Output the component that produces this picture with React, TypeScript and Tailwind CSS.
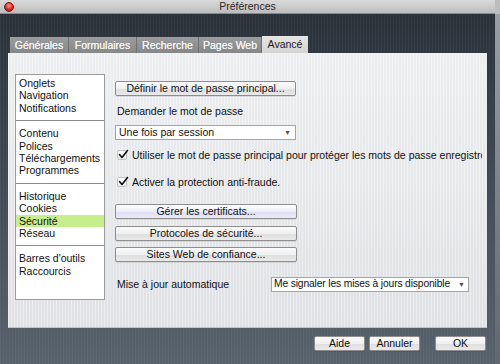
import React from "react";

const btn =
  "h-[15px] flex items-center justify-center rounded-[2px] border border-[#8e8e8e] bg-[linear-gradient(180deg,#fbfbfb_0%,#f0f0f0_50%,#dedede_51%,#e9e9e9_100%)] text-[10.5px] leading-none text-[#111] shadow-[0_1px_0_rgba(0,0,0,0.08)]";

function Check() {
  return (
    <div className="w-[10px] h-[10px] rounded-[2px] border border-[#c4c4c4] bg-[linear-gradient(180deg,#ffffff,#ececec)] relative shrink-0">
      <svg className="absolute left-[0px] top-[-2px]" width="11" height="11" viewBox="0 0 11 11">
        <path d="M1.5 5.5 L4 8.5 L9.5 1.5" fill="none" stroke="#111" strokeWidth="1.6" strokeLinecap="round" strokeLinejoin="round" />
      </svg>
    </div>
  );
}

export default function App() {
  const groups = [
    ["Onglets", "Navigation", "Notifications"],
    ["Contenu", "Polices", "Téléchargements", "Programmes"],
    ["Historique", "Cookies", "Sécurité", "Réseau"],
    ["Barres d'outils", "Raccourcis"],
  ];
  const tabs = [
    { t: "Générales", w: "w-[59px]" },
    { t: "Formulaires", w: "w-[68px]" },
    { t: "Recherche", w: "w-[62px]" },
    { t: "Pages Web", w: "w-[63px]" },
  ];
  return (
    <div className="w-[500px] h-[364px] flex overflow-hidden font-['Liberation_Sans',Arial,sans-serif] text-[#111]">
      <div className="w-[495px] h-full flex flex-col">
        {/* title bar */}
        <div className="h-[14px] relative flex items-center justify-center bg-[linear-gradient(180deg,#d9d9d9,#bdbdbd)] border-b border-[#8a8a8a]">
          <div className="absolute left-[4px] top-[2px] w-[10px] h-[10px] rounded-full bg-[radial-gradient(circle_at_50%_35%,#ff9a8a_0%,#e2261c_55%,#8e0f08_100%)] border border-[#7a1a14]" />
          <span className="text-[10.5px] leading-none text-[#2a2a2a]">Préférences</span>
        </div>
        {/* dark body */}
        <div className="flex-1 flex flex-col bg-[repeating-linear-gradient(90deg,rgba(255,255,255,0.035)_0px,rgba(255,255,255,0.035)_1px,transparent_1px,transparent_3px),linear-gradient(180deg,#2a3139_0%,#3f4853_45%,#58626d_100%)]">
          {/* tabs */}
          <div className="mt-[22px] ml-[10px] h-[17px] flex items-end">
            {tabs.map((tb) => (
              <div
                key={tb.t}
                className={`${tb.w} h-[16px] flex items-center justify-center bg-[linear-gradient(180deg,#9a9c9e,#858789)] border-r border-[#6f7173] text-[10.5px] leading-none text-[#f2f2f2] [text-shadow:0_0_0.4px_#ffffff]`}
              >
                {tb.t}
              </div>
            ))}
            <div className="w-[46px] h-[17px] flex items-center justify-center bg-[linear-gradient(180deg,#e6e6e6,#d4d4d4)] text-[10.5px] leading-none text-[#1a1a1a]">
              Avancé
            </div>
          </div>
          {/* panel */}
          <div className="ml-[8px] w-[479px] h-[275px] flex bg-[repeating-linear-gradient(90deg,rgba(255,255,255,0.35)_0px,rgba(255,255,255,0.35)_1px,transparent_1px,transparent_3px),linear-gradient(180deg,#eceef0,#dfe1e4)] border-b border-[#c2c4c7]">
            {/* sidebar */}
            <div className="ml-[7px] mt-[21px] w-[90px] h-[226px] bg-white border border-[#9c9c9c] pt-[2px] flex flex-col">
              {groups.map((g, gi) => (
                <div key={gi}>
                  {gi > 0 && <div className="my-[6px] h-px bg-[#8c8c8c]" />}
                  {g.map((it) => (
                    <div
                      key={it}
                      className={`h-[12.4px] leading-[12.4px] text-[10.5px] pl-[3px] whitespace-nowrap ${
                        it === "Sécurité" ? "bg-[#c6ee8c]" : ""
                      }`}
                    >
                      {it}
                    </div>
                  ))}
                </div>
              ))}
            </div>
            {/* right column */}
            <div className="ml-[10px] mt-[28px] w-[367px] flex flex-col overflow-hidden text-[10.5px]">
              <div className={`${btn} w-[181px]`}>Définir le mot de passe principal...</div>
              <div className="mt-[9px] h-[12px] leading-[12px] pl-[2px]">Demander le mot de passe</div>
              <div className="mt-[8px] w-[181px] h-[15px] flex items-center bg-white border border-[#a5a5a5] pl-[3px] pr-[4px]">
                <span className="flex-1 leading-none">Une fois par session</span>
                <span className="text-[7px] text-[#555] leading-none">▼</span>
              </div>
              <div className="mt-[9px] h-[12px] flex items-center pl-[2px] whitespace-nowrap">
                <Check />
                <span className="ml-[5px] leading-[12px]">
                  Utiliser le mot de passe principal pour protéger les mots de passe enregistrés
                </span>
              </div>
              <div className="mt-[15px] h-[12px] flex items-center pl-[2px] whitespace-nowrap">
                <Check />
                <span className="ml-[5px] leading-[12px]">Activer la protection anti-fraude.</span>
              </div>
              <div className={`${btn} mt-[16px] w-[182px] !bg-[linear-gradient(180deg,#fdfdff_0%,#eeeefb_50%,#dedff2_51%,#e9e9f8_100%)]`}>
                Gérer les certificats...
              </div>
              <div className={`${btn} mt-[7px] w-[182px]`}>Protocoles de sécurité...</div>
              <div className={`${btn} mt-[6px] w-[182px]`}>Sites Web de confiance...</div>
              <div className="mt-[15px] h-[15px] flex items-center">
                <span className="w-[156px] pl-[2px] leading-none">Mise à jour automatique</span>
                <div className="w-[198px] h-[15px] flex items-center bg-white border border-[#a5a5a5] pl-[2px] pr-[3px] whitespace-nowrap">
                  <span className="flex-1 leading-none tracking-[-0.15px] text-[10.3px]">Me signaler les mises à jours disponible</span>
                  <span className="ml-[2px] shrink-0 text-[7px] text-[#555] leading-none">▼</span>
                </div>
              </div>
            </div>
          </div>
          {/* footer buttons */}
          <div className="mt-[8px] pl-[314px] flex">
            <div className={`${btn} w-[51px]`}>Aide</div>
            <div className={`${btn} ml-[4px] w-[51px]`}>Annuler</div>
            <div className={`${btn} ml-[15px] w-[51px]`}>OK</div>
          </div>
        </div>
      </div>
      {/* right desktop strip */}
      <div className="w-[5px] h-full flex flex-col bg-[linear-gradient(180deg,#9aa0a6,#5f6770)]">
        <div className="h-[14px] bg-[#bdbdbd]" />
      </div>
    </div>
  );
}
